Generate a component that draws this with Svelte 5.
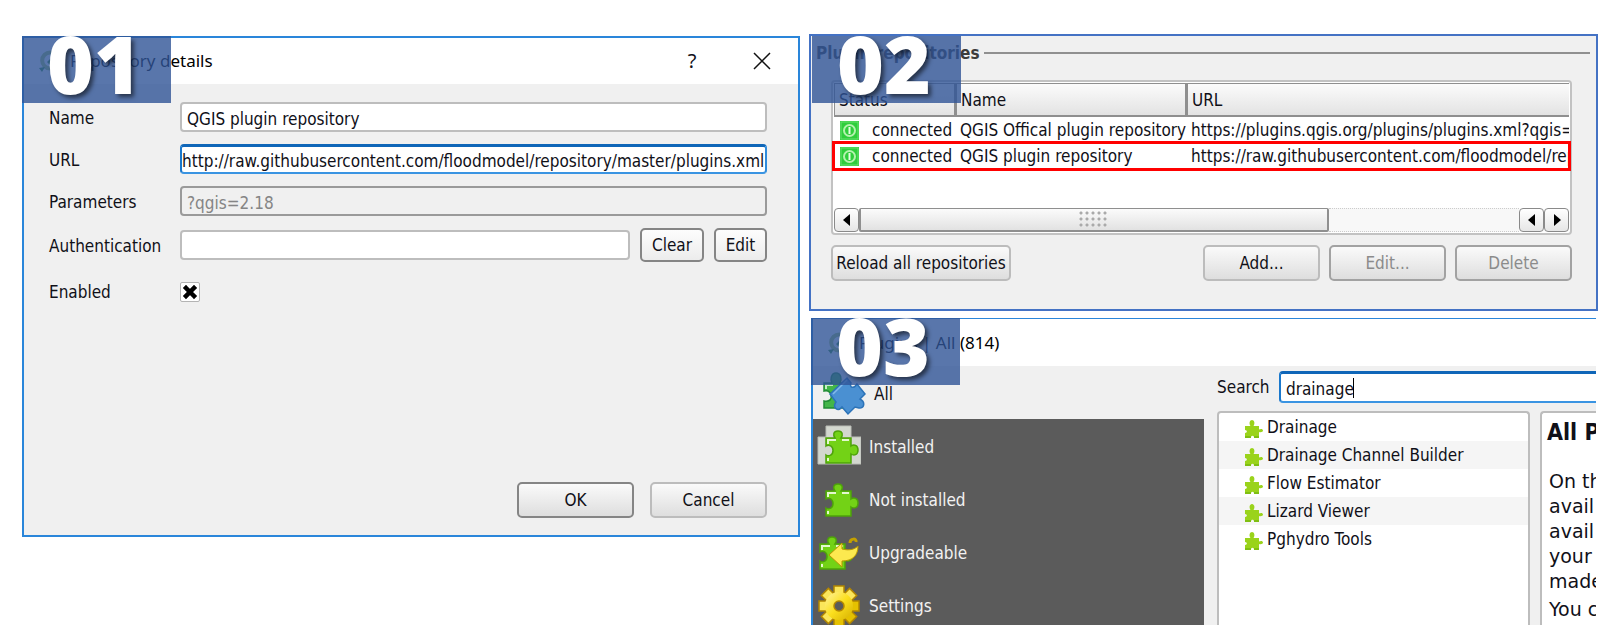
<script>
  let name = $state('QGIS plugin repository');
  let url = $state('http://raw.githubusercontent.com/floodmodel/repository/master/plugins.xml');
  let auth = $state('');
  let enabled = $state(true);
  let search = $state('drainage');

  const repositories = [
    { name: 'QGIS Offical plugin repository', url: 'https://plugins.qgis.org/plugins/plugins.xml?qgis=2.18', marked: false },
    { name: 'QGIS plugin repository', url: 'https://raw.githubusercontent.com/floodmodel/repository', marked: true }
  ];
  const sections = ['All', 'Installed', 'Not installed', 'Upgradeable', 'Settings'];
  const plugins = ['Drainage', 'Drainage Channel Builder', 'Flow Estimator', 'Lizard Viewer', 'Pghydro Tools'];
  const details = ['On the', 'avail', 'avail', 'your', 'made'];
  const teeth = [0, 45, 90, 135, 180, 225, 270, 315];
</script>

{#snippet badge(text)}
  <span class="badge">{text}</span>
{/snippet}

{#snippet appIcon()}
  <svg class="app-icon" viewBox="0 0 22 22" aria-hidden="true">
    <path d="M18 5a8 8 0 1 0 0 11" fill="none" stroke="#a9c76b" stroke-width="4" />
    <path d="M12 9l9 9-3 3-9-9zM1 18l6-1-3 5z" fill="#3c8f3a" />
  </svg>
{/snippet}

{#snippet puzzle()}
  <path
    d="M1 8H10C8 5 8 1 13 1S18 5 16 8H26V16C29 14 33 15 33 20S29 26 26 24V33H1V25C4 27 8 25 8 20.500S4 14 1 16Z"
    fill="#73d216" stroke="#4ea30a" stroke-width="1.500" />
  <path d="M3 14V10H11M17 10H24M3 28V31" fill="none" stroke="#e4f8cf" stroke-width="2" />
{/snippet}

{#snippet sectionIcon(section)}
  <svg class="section-icon" viewBox="0 0 44 44" aria-hidden="true">
    {#if section === 'All'}
      <path d="M2 11H10C8 8 9 1 14 1S20 7 18 11H27V36H2V29C8 30 10 27 9 23S6 18 2 19Z" fill="#43b649" stroke="#218c35" stroke-width="1.500" />
      <path d="M4 17V13H11" fill="none" stroke="#c7edc5" stroke-width="2" />
      <path d="M25 6L29 11C27 16 32 17 35 12L43 22L38 27C44 30 42 37 37 36L33 35L26 42L20 35C16 40 10 36 14 30L8 22Z" fill="#4a90d2" stroke="#2c73b8" stroke-width="1.500" />
      <path d="M11 22L25 8" fill="none" stroke="#83b9ea" stroke-width="1.500" />
    {:else if section === 'Installed'}
      <path d="M9 1H34V12H44V39H1V12H9Z" fill="#d3d7cf" stroke="#babdb6" />
      <g transform="translate(8 5)">{@render puzzle()}</g>
    {:else if section === 'Not installed'}
      <g transform="translate(8 5)">{@render puzzle()}</g>
    {:else if section === 'Upgradeable'}
      <g transform="translate(2 5)">{@render puzzle()}</g>
      <path d="M33 12C33 7 40 7 39 11" fill="none" stroke="#c4a000" stroke-width="3" />
      <path d="M12 24L25 12V18C33 20 38 18 41 15C41 24 36 30 25 30V36Z" fill="#fce94f" stroke="#b89600" />
    {:else}
      <defs>
        <linearGradient id="gold" x1="0" y1="0" x2="1" y2="1">
          <stop offset="0" stop-color="#fff3a0" />
          <stop offset=".5" stop-color="#fbdf1e" />
          <stop offset="1" stop-color="#d6b000" />
        </linearGradient>
      </defs>
      <g transform="translate(22 22)">
        {#each teeth as angle}
          <path d="M-5 -11L-5 -20H5L5 -11Z" transform="rotate({angle})" fill={angle > 60 && angle < 220 ? '#e5c100' : '#fbe65a'} stroke="#b38600" stroke-width="1.500" />
        {/each}
        <path d="M0-14A14 14 0 1 0 0 14A14 14 0 1 0 0-14ZM0-5A5 5 0 1 1 0 5A5 5 0 1 1 0-5Z" fill="url(#gold)" />
        <circle r="5" fill="none" stroke="#b38600" stroke-width="1.500" />
      </g>
    {/if}
  </svg>
{/snippet}

<main class="page">
  <section class="window details">
    {@render badge('01')}
    <header class="titlebar">
      {@render appIcon()}
      <h1>Repository details</h1>
      <button class="plain help" aria-label="Help">?</button>
      <button class="plain" aria-label="Close">
        <svg class="close" viewBox="0 0 18 18" aria-hidden="true"><path d="M1 1L17 17M17 1L1 17" stroke="#111" stroke-width="1.500" /></svg>
      </button>
    </header>
    <form class="form">
      <div class="row">
        <label for="name">Name</label>
        <input id="name" class="field" bind:value={name} />
      </div>
      <div class="row">
        <label for="url">URL</label>
        <input id="url" class="field active tight" bind:value={url} />
      </div>
      <div class="row">
        <label for="params">Parameters</label>
        <input id="params" class="field" value="?qgis=2.18" disabled />
      </div>
      <div class="row auth">
        <label for="auth">Authentication</label>
        <input id="auth" class="field" bind:value={auth} />
        <button type="button" class="btn small dark">Clear</button>
        <button type="button" class="btn small dark edit">Edit</button>
      </div>
      <div class="row enabled">
        <label for="enabled">Enabled</label>
        <input id="enabled" type="checkbox" bind:checked={enabled} />
      </div>
      <div class="actions">
        <button type="button" class="btn wide dark">OK</button>
        <button type="button" class="btn wide">Cancel</button>
      </div>
    </form>
  </section>

  <div class="right">
    <section class="window repos">
      {@render badge('02')}
      <div class="legend"><h2>Plugin repositories</h2></div>
      <div class="frame">
        <table>
          <colgroup><col class="c-status" /><col class="c-name" /><col /></colgroup>
          <thead>
            <tr><th>Status</th><th>Name</th><th>URL</th></tr>
          </thead>
          <tbody>
            {#each repositories as repo}
              <tr class:marked={repo.marked}>
                <td>
                  <span class="status">
                    <svg viewBox="0 0 19 19" aria-hidden="true">
                      <rect width="19" height="19" fill="#2fce3c" />
                      <rect x="1" y="1" width="17" height="17" fill="none" stroke="#6be070" />
                      <circle cx="9.500" cy="9.500" r="5.500" fill="none" stroke="#b4f2ae" stroke-width="2" />
                      <path d="M9.500 6V13" stroke="#e6ffe2" stroke-width="2" />
                    </svg>
                    connected
                  </span>
                </td>
                <td>{repo.name}</td>
                <td>{repo.url}</td>
              </tr>
            {/each}
          </tbody>
        </table>
        <div class="scroll">
          <button class="arrow" aria-label="Scroll left"><svg viewBox="0 0 8 12"><path d="M7 0V12L0 6Z" /></svg></button>
          <div class="thumb"><span class="grip"></span></div>
          <div class="track"></div>
          <button class="arrow" aria-label="Scroll back"><svg viewBox="0 0 8 12"><path d="M7 0V12L0 6Z" /></svg></button>
          <button class="arrow" aria-label="Scroll right"><svg viewBox="0 0 8 12"><path d="M1 0V12L8 6Z" /></svg></button>
        </div>
      </div>
      <div class="repo-actions">
        <button class="btn reload">Reload all repositories</button>
        <button class="btn wide">Add...</button>
        <button class="btn wide" disabled>Edit...</button>
        <button class="btn wide" disabled>Delete</button>
      </div>
    </section>

    <section class="window manager">
      {@render badge('03')}
      <header class="titlebar">
        {@render appIcon()}
        <h1>Plugins | All (814)</h1>
      </header>
      <div class="body">
        <nav class="sections">
          {#each sections as section, i}
            <button class="section" class:selected={i === 0}>
              {@render sectionIcon(section)}
              <span>{section}</span>
            </button>
          {/each}
        </nav>
        <div class="content">
          <div class="search">
            <label for="search">Search</label>
            <div class="search-box">
              <input id="search" class="field active" bind:value={search} />
              <span class="caret"></span>
            </div>
          </div>
          <div class="panes">
            <ul class="plugins">
              {#each plugins as plugin}
                <li>
                  <svg viewBox="0 0 19 19" aria-hidden="true">
                    <path d="M1 6H6.500C4.500 3 6 0 8 0S11.500 3 9.500 6H15V9.500C17 8.500 19 9 19 10.500S17 12.500 15 12V18H10C10.500 15 6.500 15 7 18H1V13C3.500 13 3.500 10 1 10Z" fill="#9ad31b" />
                    <path d="M1 17H7M10 17H15" stroke="#7fbf12" stroke-width="2" />
                  </svg>
                  {plugin}
                </li>
              {/each}
            </ul>
            <article class="about">
              <h3>All Plugins</h3>
              <p>{#each details as line}<span>{line}</span>{/each}</p>
              <p>You can</p>
            </article>
          </div>
        </div>
      </div>
    </section>
  </div>
</main>

<style>
  :global(body) { margin: 0; background: #fff; }
  .page, .page * { box-sizing: border-box; }
  .page {
    display: grid;
    grid-template-columns: minmax(0, 778fr) minmax(0, 789fr);
    gap: 9px;
    height: 100vh;
    overflow: hidden;
    padding: 34px 0 0 22px;
    font: 17px/20px "DejaVu Sans Condensed", "DejaVu Sans", sans-serif;
    color: #101018;
  }
  h1, h2, h3, p, ul { margin: 0; padding: 0; font-weight: normal; }
  button, input { font: inherit; color: inherit; margin: 0; }
  .window { position: relative; background: #f0f0f0; border: 2px solid #2a86da; }
  .badge {
    position: absolute;
    z-index: 2;
    top: -2px;
    left: -2px;
    width: 149px;
    height: 67px;
    padding-left: 25px;
    background: rgba(47, 84, 150, .8);
    color: #fff;
    font: 900 80px/54px "Noto Sans", sans-serif;
    text-shadow: 3px 3px 4px rgba(0, 0, 0, .55);
  }
  .titlebar {
    display: flex;
    align-items: center;
    height: 46px;
    padding: 0 26px 0 14px;
    background: #fff;
  }
  h1 { flex: 1; font: 17px/24px "Noto Sans", sans-serif; color: #000; }
  .app-icon { width: 22px; height: 22px; margin-right: 10px; }
  .plain { display: grid; place-items: center; border: 0; padding: 0; background: none; width: 20px; height: 24px; }
  .help { margin-right: 50px; font: 20px/24px "Noto Sans", sans-serif; }
  .close { width: 18px; height: 18px; }

  .details { display: flex; flex-direction: column; align-self: start; margin-top: 2px; min-height: 501px; }
  .form { flex: 1; display: flex; flex-direction: column; gap: 12px; padding: 18px 31px 17px 25px; }
  .row { display: flex; align-items: center; }
  .row label { flex: 0 0 131px; padding-top: 1px; }
  .field {
    flex: 1;
    width: 100%;
    min-width: 0;
    height: 30px;
    padding: 3px 5px 0;
    border: 2px solid #bdbdbd;
    border-radius: 4px;
    background: #fff;
    outline: 0;
  }
  .field:disabled { border-color: #9a9a9a; background: #f0f0f0; color: #858585; }
  .field.active { border-color: #0f66b8 #2f8cdc #3a94e2 #1a78cc; border-width: 3px 2px 2px; }
  .field.tight { padding: 2px 0 0; }
  .auth .field { margin-right: 10px; }
  .btn {
    height: 36px;
    padding: 0;
    border: 2px solid #bcbcbc;
    border-radius: 5px;
    background: linear-gradient(#fafafa, #dedede);
    text-align: center;
  }
  .btn:disabled { border-color: #a2a2a2; color: #8b8b8b; }
  .btn.dark { border-color: #858585; }
  .btn.small { height: 34px; width: 64px; background: linear-gradient(#fdfdfd, #ececec); }
  .btn.edit { width: 53px; margin-left: 10px; }
  .btn.wide { width: 117px; }
  .enabled { margin-top: 7px; }
  input[type="checkbox"] {
    appearance: none;
    width: 20px;
    height: 20px;
    border: 1px solid #b4b4b4;
    border-radius: 2px;
    background: #fff;
  }
  input[type="checkbox"]:checked {
    background: #fff url('data:image/svg+xml,<svg xmlns="http://www.w3.org/2000/svg" viewBox="0 0 18 18"><path d="M5 5L13 13M13 5L5 13" stroke="black" stroke-width="4.500" stroke-linecap="square"/></svg>') center / 18px;
  }
  .actions { display: flex; justify-content: flex-end; gap: 16px; margin-top: auto; }

  .right { display: flex; flex-direction: column; gap: 7px; min-height: 0; }
  .repos { flex: none; height: 277px; border-color: #4472c4; padding: 7px 24px 0 20px; }
  .repos .badge { top: 0; left: 1px; }
  .legend { display: flex; align-items: center; gap: 4px; margin: 0 -18px 17px -15px; }
  .legend h2 { font-weight: bold; font-size: 17px; line-height: 20px; color: #3c3c3c; }
  .legend::after { content: ""; flex: 1; height: 2px; background: #909090; }
  .frame { height: 155px; padding: 1px; border: 2px solid #c2c2c2; border-radius: 4px; background: #fff; display: flex; flex-direction: column; }
  table { width: 100%; table-layout: fixed; border-collapse: separate; border-spacing: 0; }
  .c-status { width: 122px; }
  .c-name { width: 231px; }
  th {
    height: 34px;
    padding: 0 4px;
    text-align: left;
    font-weight: normal;
    border: solid #8f8f8f;
    border-width: 1px 2px 2px 1px;
    background: linear-gradient(#fbfbfb, #e3e3e3);
  }
  th:last-child { border-right: 0; }
  td { height: 26px; padding: 0 0 0 4px; overflow: hidden; white-space: nowrap; }
  td:first-child { padding-left: 6px; }
  .marked { outline: 3px solid #f00; outline-offset: -1px; }
  .status { display: flex; align-items: center; gap: 13px; }
  .status svg { width: 19px; height: 19px; }
  .scroll { display: flex; height: 24px; margin-top: auto; }
  .arrow { width: 25px; padding: 0; display: grid; place-items: center; border: 1px solid #8a8a8a; border-radius: 4px; background: linear-gradient(#fff, #e6e6e6); }
  .arrow svg { width: 8px; height: 12px; }
  .thumb { flex: 470; display: grid; place-items: center; border: 2px solid #8f8f8f; border-width: 1px 2px 2px; border-radius: 2px; background: linear-gradient(#fbfbfb, #e2e2e2); }
  .grip { width: 30px; height: 18px; background: radial-gradient(circle at 2px 2px, #aaa 1px, transparent 2px) 0 0 / 6px 6px; }
  .track { flex: 192; border: dotted #ccc; border-width: 1px 0; background: #f8f8f8; }
  .repo-actions { display: flex; gap: 9px; margin-top: 10px; }
  .reload { width: 180px; margin-right: auto; }

  .manager { flex: 1; min-height: 0; margin: 0 2px; border-right: 0; border-bottom: 0; border-top-width: 1px; display: flex; flex-direction: column; }
  .manager .badge { top: -1px; }
  .manager .titlebar { flex: none; height: 47px; }
  .body { flex: 1; display: flex; min-height: 0; overflow: hidden; }
  .sections { flex: 0 0 391px; background: #5b5b5b; overflow: hidden; }
  .section {
    display: flex;
    align-items: center;
    gap: 8px;
    width: 100%;
    height: 53px;
    padding: 2px 0 0 4px;
    border: 0;
    background: none;
    color: #f2f2f2;
    text-align: left;
  }
  .section.selected { background: #f0f0f0; color: #101018; padding-left: 9px; }
  .section-icon { width: 44px; height: 44px; }
  .content { flex: 1; min-width: 0; display: flex; flex-direction: column; padding: 5px 0 0 13px; overflow: hidden; }
  .search { display: flex; align-items: center; }
  .search label { flex: 0 0 62px; }
  .search-box { position: relative; flex: 1; display: flex; }
  .search-box .field { height: 32px; border-right: 0; border-radius: 4px 0 0 4px; }
  .caret { position: absolute; left: 74px; top: 7px; width: 1px; height: 20px; background: #000; }
  .panes { flex: 1; min-height: 0; display: flex; gap: 10px; padding-top: 8px; }
  .plugins { flex: 0 0 313px; list-style: none; border: 2px solid #bdbdbd; border-bottom: 0; border-radius: 4px 4px 0 0; background: #fff; }
  .plugins li { display: flex; align-items: center; gap: 4px; height: 28px; padding-left: 25px; }
  .plugins li:nth-child(even) { background: #f5f5f5; }
  .plugins svg { width: 19px; height: 19px; margin-top: 4px; }
  .about {
    flex: 1;
    min-width: 0;
    overflow: hidden;
    white-space: nowrap;
    padding: 4px 0 0 7px;
    border: solid #bdbdbd;
    border-width: 2px 0 0 2px;
    border-radius: 4px 0 0 0;
    background: #fff;
    font: 19px/25px "DejaVu Sans", sans-serif;
  }
  h3 { font: bold 23px/30px "DejaVu Sans Condensed", sans-serif; margin: 0 0 22px -2px; }
  .about p { margin-bottom: 3px; }
  .about span { display: block; }
</style>
